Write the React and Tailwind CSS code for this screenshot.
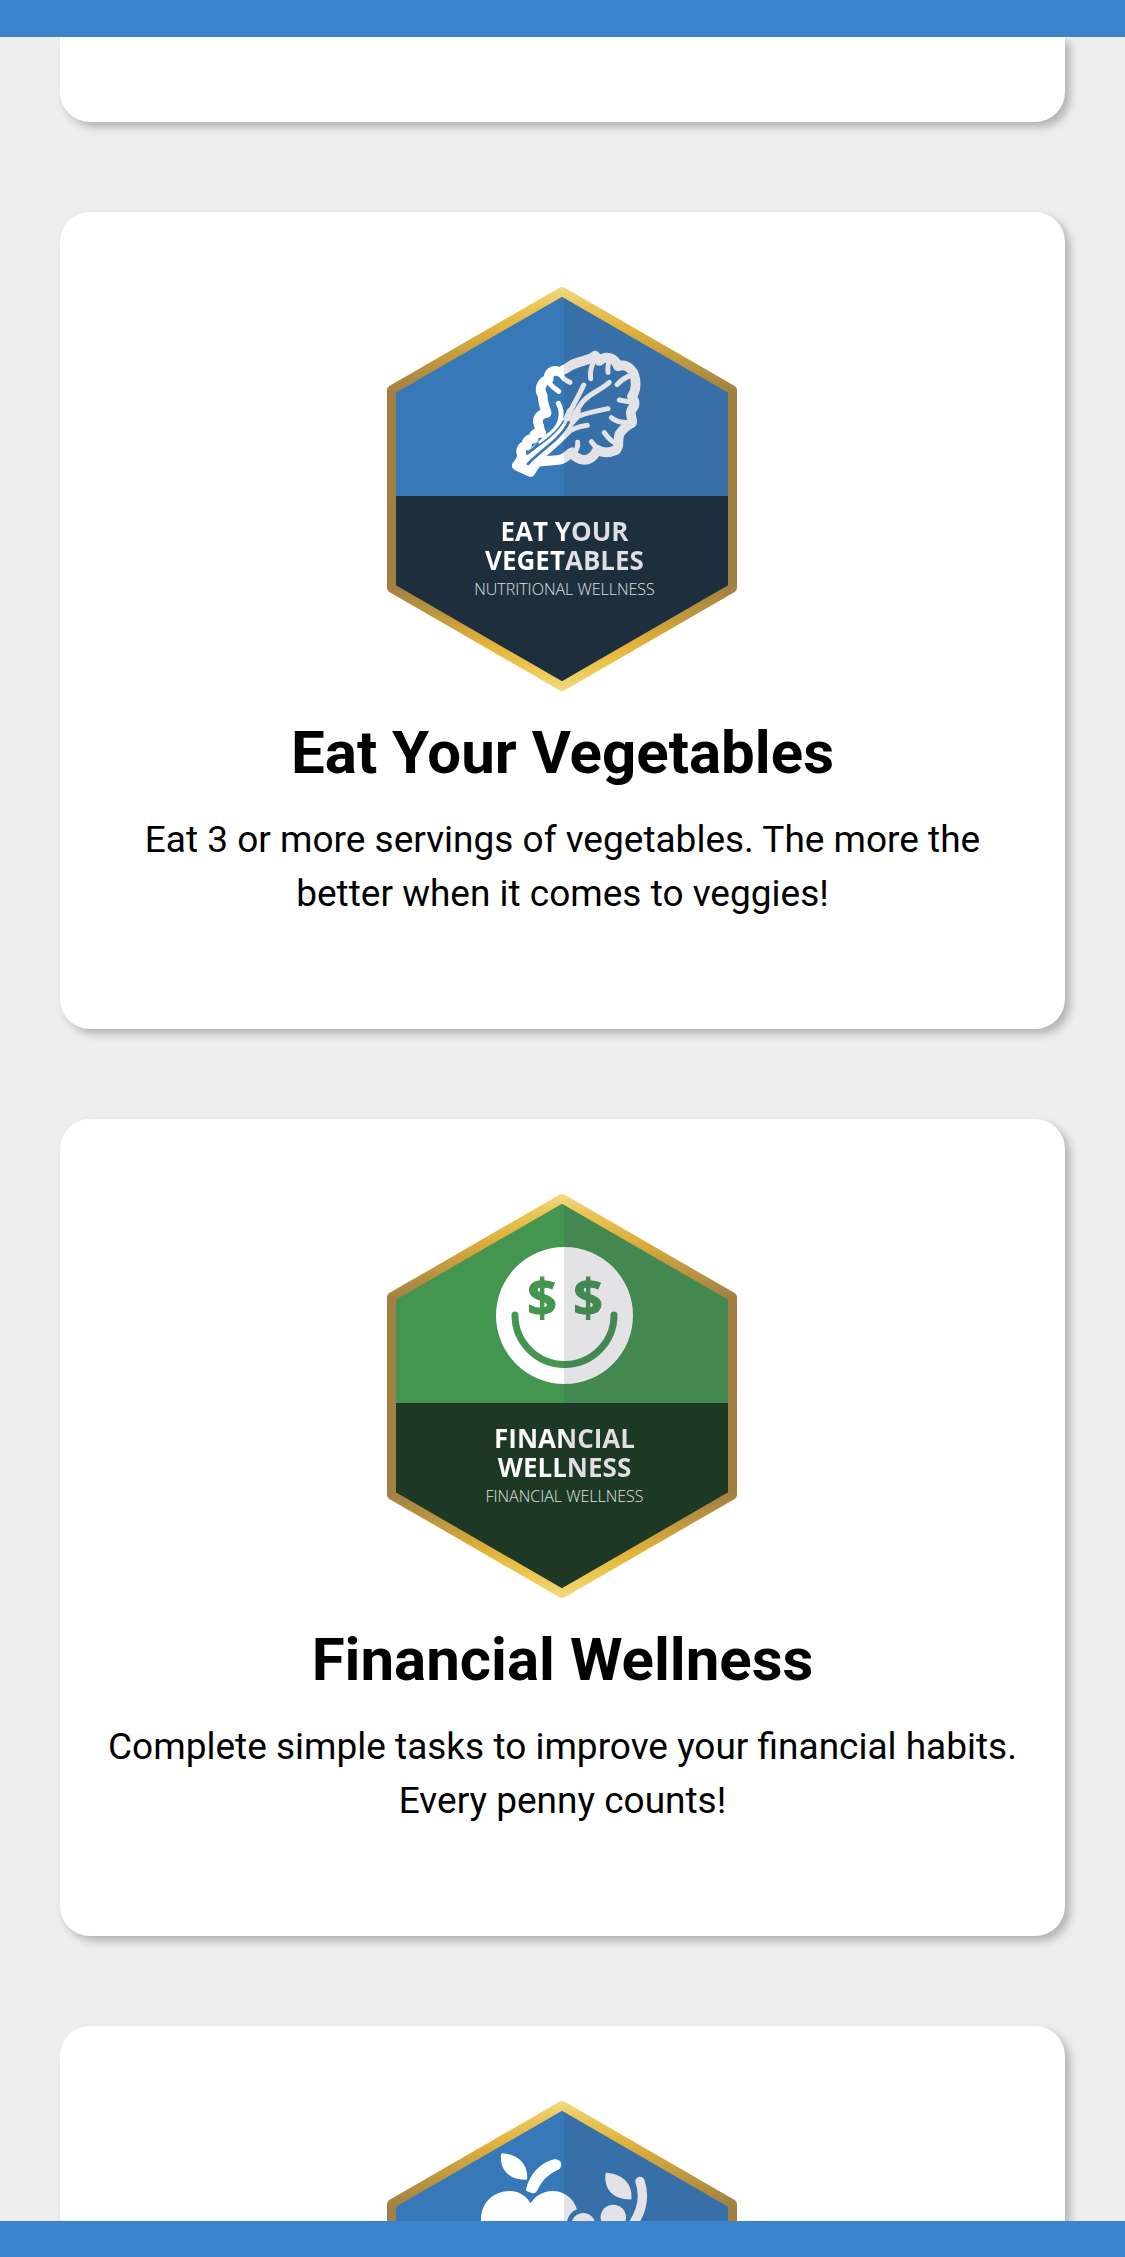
import React from "react";

const HEX = "M192 21.5 L362.5 120 V318 L192 416.5 L21.5 318 V120 Z";

function Badge({ id, color, panel, name, caption, children }) {
  return (
    <div className="relative w-[390px] max-w-full font-['Open_Sans',sans-serif]">
      <svg viewBox="-2 0 390 438" className="block w-full" aria-hidden="true">
        <defs>
          <linearGradient id={`${id}-gold`} gradientUnits="userSpaceOnUse" x1="0" y1="17" x2="0" y2="421">
            <stop offset="0" stopColor="#f3d980" />
            <stop offset="0.05" stopColor="#e9c455" />
            <stop offset="0.11" stopColor="#e0b03c" />
            <stop offset="0.19" stopColor="#bd963f" />
            <stop offset="0.26" stopColor="#a18042" />
            <stop offset="0.74" stopColor="#a18042" />
            <stop offset="0.81" stopColor="#bd963f" />
            <stop offset="0.89" stopColor="#e5b43a" />
            <stop offset="0.95" stopColor="#edc956" />
            <stop offset="1" stopColor="#f3d980" />
          </linearGradient>
          <clipPath id={`${id}-clip`}>
            <path d={HEX} />
          </clipPath>
        </defs>
        <g clipPath={`url(#${id}-clip)`}>
          <rect width="390" height="438" fill={color} />
          {children}
          <rect x="194" width="196" height="226" fill="#464655" fillOpacity="0.15" />
          <rect y="226" width="390" height="212" fill={panel} />
        </g>
        <path d={HEX} fill="none" stroke={`url(#${id}-gold)`} strokeWidth="9" strokeLinejoin="round" />
      </svg>
      {name && (
        <div className="absolute inset-x-0 top-[247px] pr-[98px] pl-[102px] text-center">
          <p className="bg-linear-to-r from-white from-50% to-[#dfdfe4] to-50% bg-clip-text text-[26px] leading-[29px] font-bold text-transparent">
            {name}
          </p>
          <p className="mt-1 text-[16px] leading-5 font-light whitespace-nowrap text-white/85">{caption}</p>
        </div>
      )}
    </div>
  );
}

function LeafIcon() {
  return (
    <g transform="translate(120 65) scale(0.3333)" fill="none" stroke="#fff" strokeLinecap="round" strokeLinejoin="round">
      <path
        strokeWidth="29"
        d="M80 392 L121 411 L140 382 C170 374 200 380 217 372 C230 366 236 356 246 352 C256 372 284 380 300 370 C312 364 317 356 322 344 C340 356 362 352 378 345 C390 335 382 318 388 298 C396 286 402 276 426 264 C430 250 416 236 426 222 C440 208 434 196 426 184 C440 165 440 135 430 113 C418 94 402 86 384 94 C374 66 346 60 328 78 L315 62 C300 78 262 78 242 92 C226 102 214 110 206 110 C188 102 174 114 176 132 C152 140 146 164 158 182 C158 202 164 216 170 234 C148 236 138 254 147 272 C148 284 154 294 154 294 C140 292 130 296 131 311 C114 312 107 320 111 331 C94 334 90 348 96 360 C96 372 90 380 80 392 Z"
      />
      <path strokeWidth="24" d="M102 382 C150 346 190 316 228 262" />
      <path strokeWidth="20" d="M116 398 C160 356 196 330 232 292" />
      <g strokeWidth="15">
        <path d="M208 112 Q218 134 240 142 M172 138 Q186 156 206 169" />
        <path d="M314 74 Q298 104 302 131 M356 84 Q352 98 354 112 M426 120 Q400 128 381 149 M430 203 L388 195 M426 262 Q384 266 364 248" />
        <path d="M392 332 Q362 322 343 293 M334 354 Q322 342 304 320 M246 358 Q266 342 263 322" />
        <path d="M205 205 C220 232 214 264 192 288 L120 352 M281 150 C260 196 238 230 222 268" />
        <path d="M358 142 C326 170 292 178 274 206 L236 262 M354 221 Q290 234 264 244 L232 280 M292 271 Q254 276 230 294" />
      </g>
      <path strokeWidth="14" d="M222 264 L238 226 M238 268 L266 228" />
      <g stroke="#3678b8">
        <path strokeWidth="8" d="M114 387 L126 374 L196 314 Q226 286 236 262" />
        <path strokeWidth="5" d="M114 354 C160 322 204 292 220 258" />
        <path strokeWidth="8" d="M112 355 L132 340 L144 326" />
        <path strokeWidth="14" d="M168 264 Q176 256 184 264 L172 276" />
      </g>
    </g>
  );
}

function MoneyFaceIcon() {
  return (
    <g>
      <circle cx="194.5" cy="138.5" r="68.5" fill="#fff" />
      <path d="M145 138 a49.5 49.5 0 0 0 99 0" fill="none" stroke="#43954f" strokeWidth="7" strokeLinecap="round" />
      <g fill="#43954f" stroke="#43954f" textAnchor="middle" className="font-['Open_Sans',sans-serif] text-[52px] font-bold">
        <text x="172" y="140">$</text>
        <text x="218" y="140">$</text>
      </g>
    </g>
  );
}

function FruitIcon() {
  const leaf = "M396 222 C440 225 472 250 469 297 C420 297 390 270 396 222 Z";
  return (
    <g transform="translate(0 -4) scale(0.3333)" fill="#fff">
      <path strokeWidth="5" stroke="#fff" strokeLinejoin="round" d={leaf} />
      <path d="M468 328 C478 285 510 248 552 238 C577 234 581 263 562 271 C530 285 515 305 501 333 Q495 342 485 339 L472 334 Q467 332 468 328 Z" />
      <path d="M333 450 V415 C335 368 370 333 420 333 C450 333 470 350 482 370 C495 350 515 333 550 333 C590 335 612 360 621 388 C600 396 590 415 586 450 Z" />
      <circle cx="640" cy="435" r="36" />
      <circle cx="730" cy="412" r="38" />
      <path transform="translate(313 59)" strokeWidth="5" stroke="#fff" strokeLinejoin="round" d={leaf} />
      <path d="M810 304 Q832 370 788 434" fill="none" stroke="#fff" strokeWidth="28" strokeLinecap="round" />
    </g>
  );
}

function Card({ title, text, children }) {
  return (
    <article className="flex shrink-0 flex-col items-center rounded-[30px] bg-white px-11 pt-[58px] pb-[108px] text-center shadow-[5px_5px_9px_rgba(0,0,0,0.25)]">
      {children}
      {title && <h2 className="text-[60px] leading-[90px] font-bold">{title}</h2>}
      {text && <p className="mt-[15px] text-[37px] leading-[54px]">{text}</p>}
    </article>
  );
}

export default function App() {
  return (
    <div className="flex h-screen flex-col bg-[#eeeeee] font-['Roboto',sans-serif] text-black">
      <header className="h-[37px] shrink-0 bg-[#3b83cb]" />
      <main className="flex min-h-0 flex-1 flex-col gap-[90px] overflow-hidden px-[60px]">
        <div className="h-[85px] shrink-0 rounded-b-[30px] bg-white shadow-[5px_5px_9px_rgba(0,0,0,0.25)]" />
        <Card title="Eat Your Vegetables" text="Eat 3 or more servings of vegetables. The more the better when it comes to veggies!">
          <Badge id="veg" color="#3678b8" panel="#1d2e3d" name="EAT YOUR VEGETABLES" caption="NUTRITIONAL WELLNESS">
            <LeafIcon />
          </Badge>
        </Card>
        <Card title="Financial Wellness" text="Complete simple tasks to improve your financial habits. Every penny counts!">
          <Badge id="fin" color="#43954f" panel="#1d3824" name="FINANCIAL WELLNESS" caption="FINANCIAL WELLNESS">
            <MoneyFaceIcon />
          </Badge>
        </Card>
        <Card>
          <Badge id="fruit" color="#3678b8" panel="#1d2e3d">
            <FruitIcon />
          </Badge>
        </Card>
      </main>
      <footer className="h-9 shrink-0 bg-[#3b83cb]" />
    </div>
  );
}
